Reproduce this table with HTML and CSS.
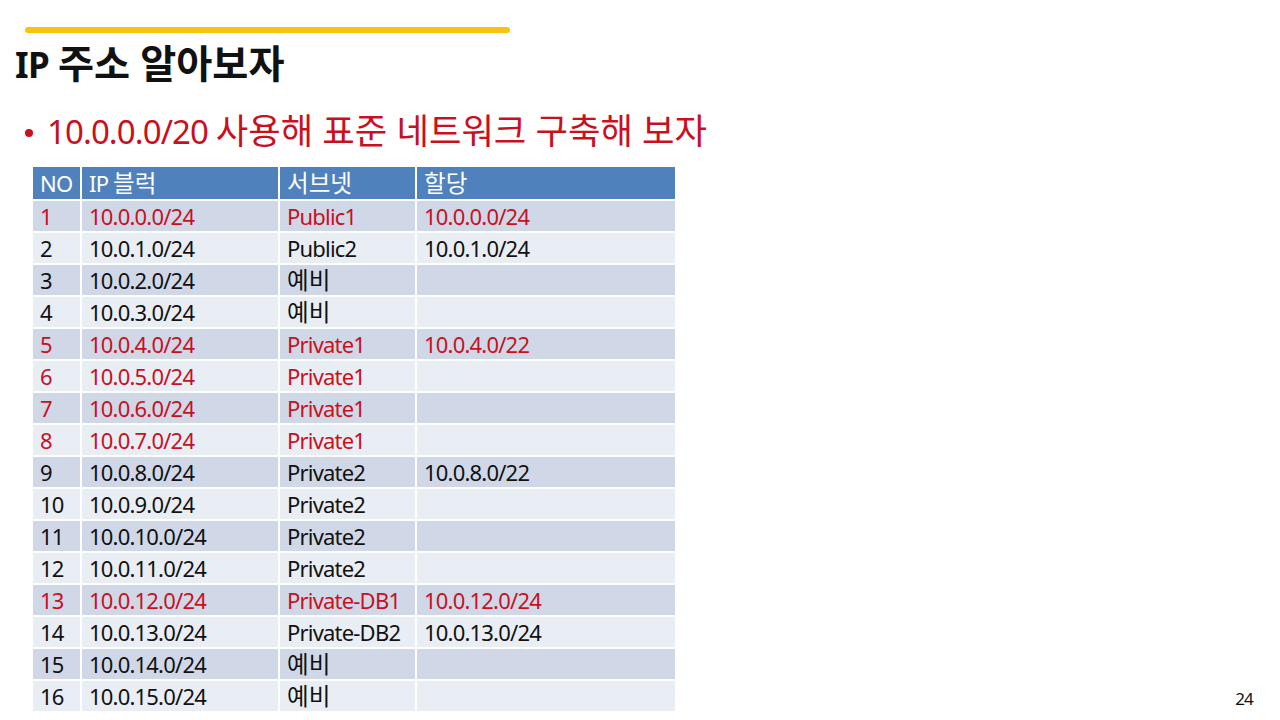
FILE: index.html
```html
<!DOCTYPE html>
<html lang="ko">
<head>
<meta charset="utf-8">
<link rel="stylesheet" href="styles.css">
</head>
<body>
<div class="slide">
  <div class="accent"></div>
  <h1 class="title">IP <span class="ko">주소 알아보자</span></h1>
  <ul class="bullets">
    <li>10.0.0.0/20 <span class="ko">사용해 표준 네트워크 구축해 보자</span></li>
  </ul>
  <table class="net">
    <thead>
      <tr><th class="c1">NO</th><th class="c2">IP <span class="ko">블럭</span></th><th class="c3"><span class="ko">서브넷</span></th><th class="c4"><span class="ko">할당</span></th></tr>
    </thead>
    <tbody>
      <tr class="red"><td>1</td><td>10.0.0.0/24</td><td>Public1</td><td>10.0.0.0/24</td></tr>
      <tr><td>2</td><td>10.0.1.0/24</td><td>Public2</td><td>10.0.1.0/24</td></tr>
      <tr><td>3</td><td>10.0.2.0/24</td><td><span class="ko">예비</span></td><td></td></tr>
      <tr><td>4</td><td>10.0.3.0/24</td><td><span class="ko">예비</span></td><td></td></tr>
      <tr class="red"><td>5</td><td>10.0.4.0/24</td><td>Private1</td><td>10.0.4.0/22</td></tr>
      <tr class="red"><td>6</td><td>10.0.5.0/24</td><td>Private1</td><td></td></tr>
      <tr class="red"><td>7</td><td>10.0.6.0/24</td><td>Private1</td><td></td></tr>
      <tr class="red"><td>8</td><td>10.0.7.0/24</td><td>Private1</td><td></td></tr>
      <tr><td>9</td><td>10.0.8.0/24</td><td>Private2</td><td>10.0.8.0/22</td></tr>
      <tr><td>10</td><td>10.0.9.0/24</td><td>Private2</td><td></td></tr>
      <tr><td>11</td><td>10.0.10.0/24</td><td>Private2</td><td></td></tr>
      <tr><td>12</td><td>10.0.11.0/24</td><td>Private2</td><td></td></tr>
      <tr class="red"><td>13</td><td>10.0.12.0/24</td><td>Private-DB1</td><td>10.0.12.0/24</td></tr>
      <tr><td>14</td><td>10.0.13.0/24</td><td>Private-DB2</td><td>10.0.13.0/24</td></tr>
      <tr><td>15</td><td>10.0.14.0/24</td><td><span class="ko">예비</span></td><td></td></tr>
      <tr><td>16</td><td>10.0.15.0/24</td><td><span class="ko">예비</span></td><td></td></tr>
    </tbody>
  </table>
  <div class="pagenum">24</div>
</div>
</body>
</html>
```
FILE: styles.css
```css
html, body {
  margin: 0;
  padding: 0;
  background: #ffffff;
}
.slide {
  position: relative;
  width: 1280px;
  height: 720px;
  overflow: hidden;
  font-family: "Noto Sans", "Noto Sans CJK KR", sans-serif;
  color: #111111;
}
.ko {
  letter-spacing: 0;
}
.accent {
  margin: 27px 0 0 25px;
  width: 485px;
  height: 6px;
  border-radius: 3px;
  background: #f9c20d;
}
.title {
  margin: 8px 0 0 15px;
  font-size: 35px;
  line-height: 44px;
  font-weight: 700;
  color: #111111;
  letter-spacing: -0.5px;
}
.title .ko {
  font-size: 1.12em;
}
.bullets {
  margin: 21px 0 0 0;
  padding: 0 0 0 47px;
  list-style: none;
}
.bullets li {
  position: relative;
  font-size: 33px;
  line-height: 44px;
  color: #c8101e;
  letter-spacing: -0.9px;
}
.bullets .ko {
  font-size: 1.07em;
}
.bullets li::before {
  content: "";
  position: absolute;
  left: -22px;
  top: 21px;
  width: 8px;
  height: 8px;
  border-radius: 50%;
  background: #c8101e;
}
.net {
  margin: 11px 0 0 31px;
  border-collapse: separate;
  border-spacing: 2px;
  width: 646px;
  table-layout: fixed;
  font-size: 22px;
  letter-spacing: -0.8px;
}
.net .ko {
  font-size: 1.07em;
  letter-spacing: 0;
}
.net th, .net td {
  box-sizing: border-box;
  height: 30px;
  padding: 0 0 1px 7px;
  text-align: left;
  font-weight: 400;
  line-height: 28px;
  white-space: nowrap;
}
.net thead th {
  height: 32px;
  padding-top: 1px;
  background: #4f81bd;
  color: #ffffff;
}
.net .c1 { width: 47px; }
.net .c2 { width: 196px; }
.net .c3 { width: 135px; }
.net .c4 { width: 258px; }
.net tbody tr:nth-child(odd) td { background: #d0d8e8; }
.net tbody tr:nth-child(even) td { background: #e9edf4; }
.net tbody tr.red td { color: #c8101e; }
.pagenum {
  position: absolute;
  right: 27px;
  bottom: 11px;
  font-size: 17px;
  line-height: 20px;
  letter-spacing: -0.8px;
  color: #111111;
}
```
